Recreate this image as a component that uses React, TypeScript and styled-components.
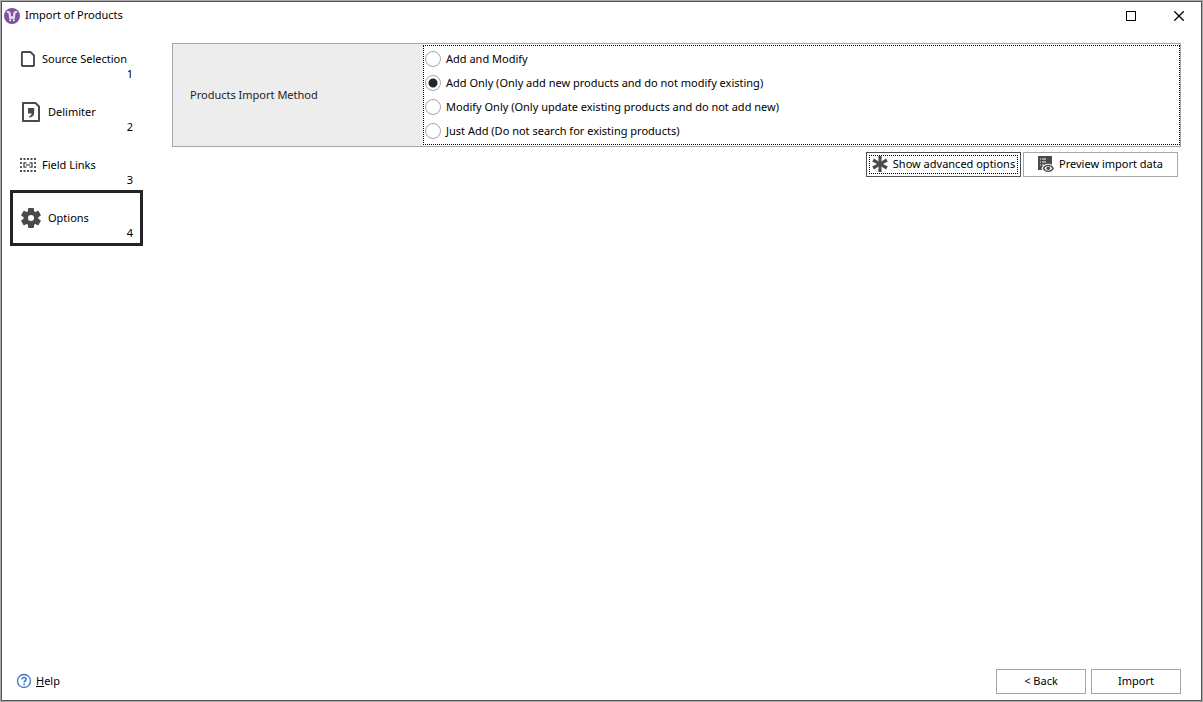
import React, { useState } from "react";
import styled, { createGlobalStyle, css } from "styled-components";

const INK = "#4a4a4e";

const GlobalStyle = createGlobalStyle`
  *, *::before, *::after { box-sizing: border-box; }
  body {
    margin: 0;
    background: #fff;
    color: #000;
    font-family: "Noto Sans", "Open Sans", "Liberation Sans", sans-serif;
    font-size: 11px;
    line-height: 16px;
  }
  button, input { font: inherit; color: inherit; }
`;

const Frame = styled.div`
  display: flex;
  min-height: 100vh;
  border: 1px solid #a9a9a9;
`;

const Window = styled.div`
  display: flex;
  flex: 1;
  flex-direction: column;
  border: 1px solid #555;
`;

const TitleBar = styled.header`
  display: flex;
  align-items: center;
  height: 28px;
  padding-left: 2px;
`;

const Title = styled.h1`
  flex: 1;
  margin: 0 0 0 5px;
  padding-bottom: 2px;
  font-size: 11px;
  font-weight: 400;
`;

const Caption = styled.div`
  display: flex;
  gap: 4px;
`;

const CaptionButton = styled.button`
  display: flex;
  align-items: center;
  justify-content: center;
  width: 44px;
  height: 28px;
  padding: 0;
  border: 0;
  background: none;
`;

const Body = styled.div`
  display: flex;
  flex: 1;
  gap: 29px;
  padding: 1px 20px 0 8px;
`;

const Steps = styled.nav`
  display: flex;
  flex: 0 0 133px;
  flex-direction: column;
`;

const Step = styled.button<{ $current: boolean }>`
  display: grid;
  grid-template-columns: auto minmax(0, 1fr) auto;
  align-items: center;
  height: 56px;
  padding: 0 7px;
  border: 3px solid ${(p) => (p.$current ? "#242428" : "transparent")};
  background: none;
  text-align: left;

  & + & {
    margin-top: -3px;
  }
`;

const StepNumber = styled.span`
  align-self: end;
  padding-bottom: 2px;
`;

const StepName = styled.span`
  padding-left: 6px;
  white-space: nowrap;
`;

const Content = styled.main`
  flex: 1;
  min-width: 0;
  padding-top: 12px;
`;

const OptionTable = styled.section`
  display: grid;
  grid-template-columns: 250px 1fr;
  border: 1px solid #a6a6a6;
`;

const OptionLabel = styled.div`
  display: flex;
  align-items: center;
  padding-left: 17px;
  background: #ededed;
  color: #222;
`;

const RadioGroup = styled.div`
  margin: 1px 0;
  padding: 1px;
  border: 1px dotted #000;
`;

const RadioRow = styled.label`
  display: flex;
  align-items: center;
  gap: 5px;
  height: 24px;
`;

const Radio = styled.input`
  flex: none;
  width: 16px;
  height: 16px;
  margin: 0;
  appearance: none;
  border: 1px solid #a6a6a6;
  border-radius: 50%;
  background: #fff;

  &:checked {
    background: radial-gradient(circle, #242428 4px, #fff 5px);
  }
`;

const Toolbar = styled.div`
  display: flex;
  justify-content: flex-end;
  gap: 2px;
  padding: 5px 3px 0 0;
`;

const Button = styled.button<{ $width: number; $focused?: boolean }>`
  display: flex;
  align-items: center;
  justify-content: center;
  gap: 5px;
  width: ${(p) => p.$width}px;
  height: 25px;
  padding: 0 0 1px;
  border: 1px solid #a6a6a6;
  background: #fff;
  white-space: nowrap;

  ${(p) =>
    p.$focused &&
    css`
      border-color: #505055;
      outline: 1px dotted #000;
      outline-offset: -4px;
    `}
`;

const Footer = styled.footer`
  display: flex;
  align-items: center;
  gap: 5px;
  padding: 0 20px 6px 14px;
`;

const HelpLink = styled.a`
  display: flex;
  align-items: center;
  gap: 4px;
  margin-right: auto;
  padding-bottom: 1px;
  color: #000;
  text-decoration: none;
`;

const StoreIcon = () => (
  <svg width="16" height="16" viewBox="0 0 16 16" aria-hidden="true">
    <circle cx="8" cy="8" r="8" fill="#7d52a0" />
    <path d="M2.800 4H5l.8 6h4.400l.8-6h2.200" fill="none" stroke="#fff" strokeWidth="1.300" />
    <path d="M5.500 4.500H7V8h2V4.500h1.500V9.500h-5z" fill="#d9c8e6" />
    <circle cx="6.200" cy="12.200" r="1" fill="#fff" />
    <circle cx="9.800" cy="12.200" r="1" fill="#fff" />
  </svg>
);

const SourceIcon = () => (
  <svg width="16" height="16" viewBox="0 0 16 16" aria-hidden="true">
    <path d="M2.500 1H10.500L14 4.500V14.400a.6.6 0 0 1-.6.6H2.500a.6.6 0 0 1-.6-.6V1.600a.6.6 0 0 1 .6-.6z" fill="none" stroke={INK} strokeWidth="1.900" />
  </svg>
);

const DelimiterIcon = () => (
  <svg width="22" height="22" viewBox="0 0 22 22" aria-hidden="true">
    <path d="M3 2h12.500L19 5.500V20H3z" fill="none" stroke={INK} strokeWidth="2" strokeLinejoin="round" />
    <path d="M8 7h6.200v4.500c0 2.900-1.500 4.700-4.900 5.200v-1.600c1.500-.5 2.200-1.300 2.400-2.600H8z" fill={INK} />
  </svg>
);

const FieldLinksIcon = () => (
  <svg width="16" height="16" viewBox="0 0 16 16" aria-hidden="true">
    <g fill={INK}>
      {[0, 3.5, 7, 10.5, 14].map((x) => (
        <React.Fragment key={x}>
          <rect x={x} y="1" width="2" height="2" />
          <rect x={x} y="13" width="2" height="2" />
        </React.Fragment>
      ))}
      {[5, 9].map((y) => (
        <React.Fragment key={y}>
          <rect x="0" y={y} width="1.800" height="2" />
          <rect x="14.200" y={y} width="1.800" height="2" />
        </React.Fragment>
      ))}
      <rect x="6" y="7.400" width="4" height="1.200" />
    </g>
    <path d="M6.500 5.900H4v4.200h2.500M9.500 5.900H12v4.200H9.500" fill="none" stroke={INK} strokeWidth="1.300" />
  </svg>
);

const GearIcon = () => (
  <svg width="22" height="22" viewBox="0 0 22 22" aria-hidden="true">
    <g fill={INK}>
      {[0, 60, 120].map((a) => (
        <rect key={a} x="8" y="1" width="6" height="20" rx="1" transform={`rotate(${a} 11 11)`} />
      ))}
      <circle cx="11" cy="11" r="7.500" />
    </g>
    <circle cx="11" cy="11" r="3" fill="#fff" />
  </svg>
);

const AsteriskIcon = () => (
  <svg width="16" height="16" viewBox="0 0 16 16" aria-hidden="true">
    <g fill={INK}>
      {[0, 60, 120].map((a) => (
        <path key={a} d="M6.300 0h3.400L9.300 8l.4 8H6.300l.4-8z" transform={`rotate(${a} 8 8)`} />
      ))}
    </g>
  </svg>
);

const PreviewIcon = () => (
  <svg width="16" height="16" viewBox="0 0 16 16" aria-hidden="true">
    <path d="M0 0h14v9H6v5H0z" fill={INK} />
    <path d="M2 3h1M4 3h4M2 6h1M4 6h4M2 9h1M4 9h2" stroke="#fff" strokeWidth="1.200" />
    <path d="M4.800 12.300c2.600-4.400 8-4.400 10.600 0-2.600 4.400-8 4.400-10.600 0z" fill="#fff" stroke="#fff" strokeWidth="2.600" />
    <path d="M5.400 12.300c2.400-4 7.400-4 9.800 0-2.400 4-7.400 4-9.800 0z" fill="#fff" stroke={INK} strokeWidth="1.300" />
    <circle cx="10.300" cy="12.300" r="1.800" fill={INK} />
  </svg>
);

const HelpIcon = () => (
  <svg width="16" height="16" viewBox="0 0 16 16" aria-hidden="true">
    <circle cx="8" cy="8" r="6.500" fill="none" stroke="#3c76c4" strokeWidth="1.300" />
    <path d="M6 6.500c0-2.700 4.100-2.500 4.100-.1 0 1.500-2 1.600-2 3.200" fill="none" stroke="#3c76c4" strokeWidth="1.600" />
    <circle cx="8.100" cy="11.400" r=".9" fill="#3c76c4" />
  </svg>
);

const steps = [
  { name: "Source Selection", icon: <SourceIcon /> },
  { name: "Delimiter", icon: <DelimiterIcon /> },
  { name: "Field Links", icon: <FieldLinksIcon /> },
  { name: "Options", icon: <GearIcon /> },
];

const methods = [
  "Add and Modify",
  "Add Only (Only add new products and do not modify existing)",
  "Modify Only (Only update existing products and do not add new)",
  "Just Add (Do not search for existing products)",
];

export default function App() {
  const [step, setStep] = useState(3);
  const [method, setMethod] = useState(1);

  return (
    <>
      <GlobalStyle />
      <Frame>
        <Window>
          <TitleBar>
            <StoreIcon />
            <Title>Import of Products</Title>
            <Caption>
              <CaptionButton aria-label="Maximize">
                <svg width="10" height="10" viewBox="0 0 10 10">
                  <rect x=".5" y=".5" width="9" height="9" fill="none" stroke="#000" />
                </svg>
              </CaptionButton>
              <CaptionButton aria-label="Close">
                <svg width="10" height="10" viewBox="0 0 10 10">
                  <path d="M.3.3l9.400 9.400M9.700.3L.3 9.700" stroke="#000" strokeWidth="1.300" />
                </svg>
              </CaptionButton>
            </Caption>
          </TitleBar>
          <Body>
            <Steps aria-label="Import steps">
              {steps.map((s, i) => (
                <Step
                  key={s.name}
                  $current={i === step}
                  aria-current={i === step ? "step" : undefined}
                  onClick={() => setStep(i)}
                >
                  {s.icon}
                  <StepName>{s.name}</StepName>
                  <StepNumber>{i + 1}</StepNumber>
                </Step>
              ))}
            </Steps>
            <Content>
              <OptionTable>
                <OptionLabel id="method-label">Products Import Method</OptionLabel>
                <RadioGroup role="radiogroup" aria-labelledby="method-label">
                  {methods.map((m, i) => (
                    <RadioRow key={m}>
                      <Radio type="radio" name="method" checked={i === method} onChange={() => setMethod(i)} />
                      {m}
                    </RadioRow>
                  ))}
                </RadioGroup>
              </OptionTable>
              <Toolbar>
                <Button $width={155} $focused>
                  <AsteriskIcon />
                  Show advanced options
                </Button>
                <Button $width={155}>
                  <PreviewIcon />
                  Preview import data
                </Button>
              </Toolbar>
            </Content>
          </Body>
          <Footer>
            <HelpLink href="#help">
              <HelpIcon />
              <span>
                <u>H</u>elp
              </span>
            </HelpLink>
            <Button $width={90}>&lt; Back</Button>
            <Button $width={90}>Import</Button>
          </Footer>
        </Window>
      </Frame>
    </>
  );
}
